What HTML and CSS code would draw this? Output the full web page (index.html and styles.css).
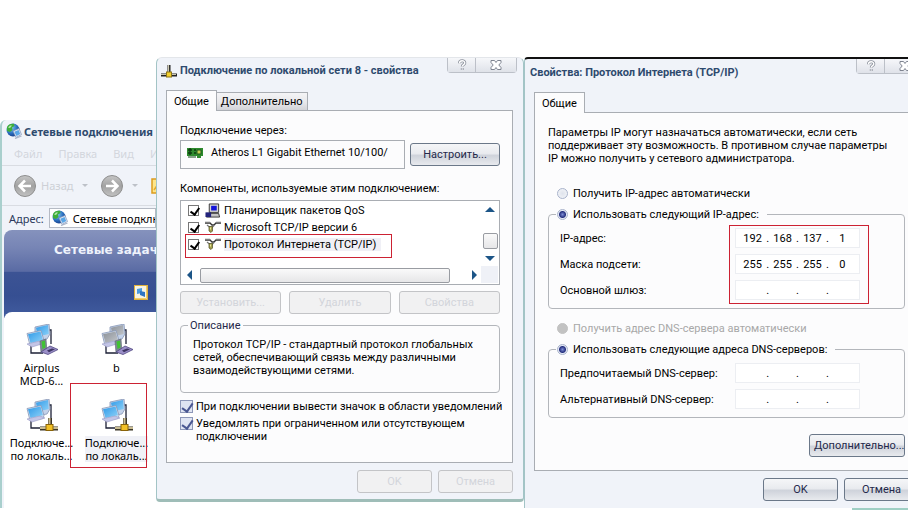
FILE: index.html
```html
<!DOCTYPE html>
<html lang="ru">
<head>
    <meta charset="UTF-8">
    <meta name="viewport" content="width=device-width, initial-scale=1.0">
    <title>Сетевые подключения</title>
    <link rel="stylesheet" href="styles.css">
</head>
<body>
    <!-- Shared icons -->
    <svg class="sprites" aria-hidden="true">
        <defs>
            <radialGradient id="globe-fill" cx="35%" cy="30%" r="75%">
                <stop offset="0" stop-color="#8fd0f5"/>
                <stop offset="0.6" stop-color="#2a6fc0"/>
                <stop offset="1" stop-color="#173c86"/>
            </radialGradient>
            <linearGradient id="screen-fill" x1="0" y1="0" x2="1" y2="1">
                <stop offset="0" stop-color="#2f9ae8"/>
                <stop offset="1" stop-color="#8fd2f8"/>
            </linearGradient>
            <linearGradient id="screen-off" x1="0" y1="0" x2="1" y2="1">
                <stop offset="0" stop-color="#8b9097"/>
                <stop offset="1" stop-color="#c3c7cc"/>
            </linearGradient>
            <linearGradient id="nav-fill" x1="0" y1="0" x2="0" y2="1">
                <stop offset="0" stop-color="#c6c6c6"/>
                <stop offset="0.5" stop-color="#a2a2a2"/>
                <stop offset="1" stop-color="#c2c2c2"/>
            </linearGradient>
        </defs>
        <symbol id="icon-globe" viewBox="0 0 16 16">
            <circle cx="7" cy="7" r="6.5" fill="url(#globe-fill)"/>
            <path d="M1 4C2 1.500 5 .3 8 .8L8.500 3 6 4.500 6.500 7 4 9 1 8z" fill="#3fae3a"/>
            <path d="M2 4.500l2-2 2 0-2 2.500z" fill="#b9e7b0"/>
            <path d="M7 8l6-2.500 2.500 6-5.500 3z" fill="#e3ecf8" stroke="#7f90b5" stroke-width=".7"/>
            <path d="M8.300 8.800L12.600 7 14.200 11l-3.700 1.900z" fill="#5aa6e6"/>
            <path d="M9 15.500l6.500-2.500" stroke="#aab5c9" stroke-width="1.300"/>
        </symbol>
        <symbol id="icon-pcs" viewBox="0 0 32 32">
            <path d="M18 6h7v14M5 21v8h12" fill="none" stroke="#1c2036" stroke-width="1.300"/>
            <path d="M9 3l14-3 1 10-3 5-12 2z" fill="#c3d2ea" stroke="#8796b5" stroke-width=".8"/>
            <path d="M10 3.700l12-2.700.8 9-3 .7-8 1.800z" fill="var(--screen)"/>
            <path d="M1 9.500l14-3 3 10-1 3-13 2z" fill="#d3dff0" stroke="#8796b5" stroke-width=".8"/>
            <path d="M2 10.300L14.500 7.600l2.500 8.700L4.500 19z" fill="var(--screen)"/>
            <path d="M1 20l13-3 5 2-13 4z" fill="#c3c5e6" stroke="#9a9cc8" stroke-width=".6"/>
        </symbol>
        <symbol id="icon-lan" viewBox="0 0 32 32">
            <use href="#icon-pcs"/>
            <path d="M24 19v8M14 29.500h18" stroke="#3a3526" stroke-width="4"/>
            <path d="M23.500 19v8M14 29h18" stroke="#c9bd93" stroke-width="2"/>
            <rect x="20" y="25.500" width="7" height="6" fill="#f2c025" stroke="#8a6408"/>
        </symbol>
        <symbol id="icon-modem" viewBox="0 0 32 32">
            <use href="#icon-pcs"/>
            <path d="M14 17l6-2 1 13-6 1z" fill="#7e8794" stroke="#5b6370" stroke-width=".6"/>
            <path d="M15.500 17.500l3.500-1 .5 7-3 1.500z" fill="#41c234"/>
            <path d="M15 28l9-6 8 3.500-10 5z" fill="#9b8fc8" stroke="#4f4680" stroke-width=".8"/>
            <path d="M21 26.500l5-2 3 .8-6 3z" fill="#3d3563"/>
        </symbol>
        <symbol id="icon-plug" viewBox="0 0 16 16">
            <path d="M8 2v8M0 12h16" stroke="#222" stroke-width="3"/>
            <path d="M7.500 2v8M0 11.500h15" stroke="#cbc7ae" stroke-width="1.200"/>
            <rect x="5.500" y="9" width="5" height="5" fill="#f3cf2c" stroke="#8c7417"/>
        </symbol>
        <symbol id="icon-protocol" viewBox="0 0 16 12">
            <path d="M0 1.500h5l2 2h2l2-2h5" fill="none" stroke="#333" stroke-width="1.300"/>
            <path d="M0 .4h5M11 .4h5" stroke="#b5b5b5" stroke-width=".8"/>
            <path d="M2 3.500l3 2.500M9 4L7 6" stroke="#777" stroke-width="1.200"/>
            <path d="M4 5h3.500v4.500L6 11 4 9.500z" fill="#a3a04e" stroke="#4c4b20" stroke-width=".7"/>
            <path d="M5 6h1v2H5z" fill="#eeeb9c"/>
        </symbol>
        <symbol id="icon-help" viewBox="0 0 12 12">
            <path d="M3.500 4.200C3.500 .9 8.800 .9 8.800 3.900 8.800 5.700 6.300 5.500 6.300 7.500M6.300 9.200v1.600" fill="none" stroke="#8b909b" stroke-width="3"/>
            <path d="M3.500 4.200C3.500 .9 8.800 .9 8.800 3.900 8.800 5.700 6.300 5.500 6.300 7.500M6.300 9.500v1" fill="none" stroke="#fff" stroke-width="1.400"/>
        </symbol>
        <symbol id="icon-close" viewBox="0 0 12 12">
            <path d="M1 1.500h3.500L6 3.500l1.500-2H11v2L8.800 6 11 8.500v2H7.500L6 8.500l-1.500 2H1v-2L3.200 6 1 3.500z" fill="#fff" stroke="#7f8490"/>
        </symbol>
    </svg>

    <div class="desktop">
        <section class="explorer">
            <header class="explorer-title">
                <svg class="icon-16"><use href="#icon-globe"/></svg>
                <h1>Сетевые подключения</h1>
            </header>
            <nav class="menu">
                <a href="#">Файл</a>
                <a href="#">Правка</a>
                <a href="#">Вид</a>
                <a href="#">Избранное</a>
            </nav>
            <div class="toolbar">
                <button class="nav-btn" aria-label="Назад" disabled>
                    <svg viewBox="0 0 22 22"><circle cx="11" cy="11" r="10.500" fill="url(#nav-fill)" stroke="#8e8e8e"/><path d="M17 11H6M11 5.500L5.500 11l5.500 5.500" fill="none" stroke="#fff" stroke-width="2.500"/></svg>
                </button>
                <span class="nav-label">Назад</span>
                <span class="drop"></span>
                <button class="nav-btn" aria-label="Вперед" disabled>
                    <svg viewBox="0 0 22 22"><circle cx="11" cy="11" r="10.500" fill="url(#nav-fill)" stroke="#8e8e8e"/><path d="M5 11h11M11 5.500l5.500 5.500-5.500 5.500" fill="none" stroke="#fff" stroke-width="2.500"/></svg>
                </button>
                <span class="drop"></span>
                <svg class="folder" viewBox="0 0 16 16"><path d="M1 1h6l1 2h8v12H1z" fill="#fde58a" stroke="#dc9c1e" stroke-width="1.500"/><path d="M3 12l4-6" stroke="#e7a92c" stroke-width="1.500"/></svg>
            </div>
            <div class="address">
                <span>Адрес:</span>
                <div class="address-box">
                    <svg class="icon-16"><use href="#icon-globe"/></svg>
                    <span>Сетевые подключения</span>
                </div>
            </div>
            <div class="tasks">
                <h2>Сетевые задачи</h2>
                <svg class="task-icon" viewBox="0 0 14 15"><rect x=".5" y=".5" width="13" height="14" fill="#f7f4e4" stroke="#e0b23d"/><path d="M12.500 1v12.500H1" fill="none" stroke="#f0cf6c"/><path d="M3 4l5-1v5l-5 1z" fill="#4a9be0"/><path d="M6 6l5 1v5l-5-2z" fill="#2f75c2"/></svg>
            </div>
            <div class="connections">
                <a href="#" class="connection">
                    <svg class="icon-32"><use href="#icon-modem"/></svg>
                    <span>Airplus<br>MCD-6...</span>
                </a>
                <a href="#" class="connection is-off">
                    <svg class="icon-32"><use href="#icon-modem"/></svg>
                    <span>b</span>
                </a>
                <a href="#" class="connection">
                    <svg class="icon-32"><use href="#icon-lan"/></svg>
                    <span>Подключе...<br>по локаль...</span>
                </a>
                <a href="#" class="connection is-selected">
                    <svg class="icon-32"><use href="#icon-lan"/></svg>
                    <span>Подключе...<br>по локаль...</span>
                    <i class="mark mark-connection"></i>
                </a>
            </div>
        </section>

        <section class="dialog dialog-lan">
            <header class="dialog-title">
                <svg class="icon-16"><use href="#icon-plug"/></svg>
                <h2>Подключение по локальной сети 8 - свойства</h2>
                <div class="window-btns">
                    <button aria-label="Справка"><svg><use href="#icon-help"/></svg></button>
                    <button aria-label="Закрыть"><svg><use href="#icon-close"/></svg></button>
                </div>
            </header>
            <div class="tabs">
                <button class="tab active">Общие</button>
                <button class="tab">Дополнительно</button>
            </div>
            <div class="panel">
                <div class="caption">Подключение через:</div>
                <div class="device-row">
                    <div class="device">
                        <svg viewBox="0 0 16 12"><path d="M0 1h16v8h-2v2h-4V9H0z" fill="#2d8a2d"/><path d="M1 3h4M1 6h4M7 3h2M7 6h2M3 1v7" stroke="#0c3d10" stroke-width="1.300"/><path d="M10 3h4v4h-4z" fill="#c3cf55" stroke="#1c5a1c"/><path d="M1 10h8" stroke="#114b15"/></svg>
                        <span>Atheros L1 Gigabit Ethernet 10/100/</span>
                    </div>
                    <button class="btn">Настроить...</button>
                </div>
                <div class="caption">Компоненты, используемые этим подключением:</div>
                <div class="list">
                    <div class="list-rows">
                        <label class="list-row">
                            <input type="checkbox" class="check-plain" checked>
                            <svg viewBox="0 0 16 16"><path d="M4 1h10v9H4z" fill="#d6d6d6" stroke="#333"/><path d="M6 3h6v5H6z" fill="#1414d8"/><path d="M1 11h13l1 4H1z" fill="#c4c4c4" stroke="#333"/><path d="M0 10h6v5H0z" fill="#23237c"/></svg>
                            <span>Планировщик пакетов QoS</span>
                        </label>
                        <label class="list-row">
                            <input type="checkbox" class="check-plain" checked>
                            <svg><use href="#icon-protocol"/></svg>
                            <span>Microsoft TCP/IP версии 6</span>
                        </label>
                        <label class="list-row">
                            <input type="checkbox" class="check-plain" checked>
                            <svg><use href="#icon-protocol"/></svg>
                            <span class="selected">Протокол Интернета (TCP/IP)</span>
                            <i class="mark mark-row"></i>
                        </label>
                    </div>
                    <div class="scroll-y">
                        <span class="arrow up"></span>
                        <span class="thumb"></span>
                        <span class="arrow down"></span>
                    </div>
                    <div class="scroll-x">
                        <span class="arrow left"></span>
                        <span class="thumb"></span>
                        <span class="arrow right"></span>
                    </div>
                    <div class="scroll-corner"></div>
                </div>
                <div class="btn-row">
                    <button class="btn" disabled>Установить...</button>
                    <button class="btn" disabled>Удалить</button>
                    <button class="btn" disabled>Свойства</button>
                </div>
                <fieldset class="description">
                    <legend>Описание</legend>
                    <p>Протокол TCP/IP - стандартный протокол глобальных сетей, обеспечивающий связь между различными взаимодействующими сетями.</p>
                </fieldset>
                <label class="option">
                    <input type="checkbox" class="check" checked>
                    <span>При подключении вывести значок в области уведомлений</span>
                </label>
                <label class="option">
                    <input type="checkbox" class="check" checked>
                    <span>Уведомлять при ограниченном или отсутствующем<br>подключении</span>
                </label>
            </div>
            <footer class="dialog-btns">
                <button class="btn" disabled>OK</button>
                <button class="btn" disabled>Отмена</button>
            </footer>
        </section>

        <section class="dialog dialog-tcp">
            <header class="dialog-title">
                <h2>Свойства: Протокол Интернета (TCP/IP)</h2>
                <div class="window-btns">
                    <button aria-label="Справка"><svg><use href="#icon-help"/></svg></button>
                    <button aria-label="Закрыть"><svg><use href="#icon-close"/></svg></button>
                </div>
            </header>
            <div class="tabs">
                <button class="tab active">Общие</button>
            </div>
            <div class="panel">
                <p class="intro">Параметры IP могут назначаться автоматически, если сеть поддерживает эту возможность. В противном случае параметры IP можно получить у сетевого администратора.</p>
                <label class="radio">
                    <input type="radio" name="ip">
                    <span>Получить IP-адрес автоматически</span>
                </label>
                <fieldset class="group">
                    <legend>
                        <label class="radio">
                            <input type="radio" name="ip" checked>
                            <span>Использовать следующий IP-адрес:</span>
                        </label>
                    </legend>
                    <div class="field">
                        <label for="ip-1">IP-адрес:</label>
                        <div class="octets">
                            <input id="ip-1" value="192">.<input aria-label="IP-адрес 2" value="168">.<input aria-label="IP-адрес 3" value="137">.<input aria-label="IP-адрес 4" value="1">
                        </div>
                    </div>
                    <div class="field">
                        <label for="mask-1">Маска подсети:</label>
                        <div class="octets">
                            <input id="mask-1" value="255">.<input aria-label="Маска 2" value="255">.<input aria-label="Маска 3" value="255">.<input aria-label="Маска 4" value="0">
                        </div>
                    </div>
                    <div class="field">
                        <label for="gate-1">Основной шлюз:</label>
                        <div class="octets">
                            <input id="gate-1">.<input aria-label="Шлюз 2">.<input aria-label="Шлюз 3">.<input aria-label="Шлюз 4">
                        </div>
                    </div>
                    <i class="mark mark-ip"></i>
                </fieldset>
                <label class="radio">
                    <input type="radio" name="dns" disabled>
                    <span>Получить адрес DNS-сервера автоматически</span>
                </label>
                <fieldset class="group">
                    <legend>
                        <label class="radio">
                            <input type="radio" name="dns" checked>
                            <span>Использовать следующие адреса DNS-серверов:</span>
                        </label>
                    </legend>
                    <div class="field">
                        <label for="dns-1">Предпочитаемый DNS-сервер:</label>
                        <div class="octets">
                            <input id="dns-1">.<input aria-label="DNS 2">.<input aria-label="DNS 3">.<input aria-label="DNS 4">
                        </div>
                    </div>
                    <div class="field">
                        <label for="alt-1">Альтернативный DNS-сервер:</label>
                        <div class="octets">
                            <input id="alt-1">.<input aria-label="Альтернативный DNS 2">.<input aria-label="Альтернативный DNS 3">.<input aria-label="Альтернативный DNS 4">
                        </div>
                    </div>
                </fieldset>
                <button class="btn more">Дополнительно...</button>
            </div>
            <footer class="dialog-btns">
                <button class="btn">OK</button>
                <button class="btn">Отмена</button>
            </footer>
        </section>
    </div>
</body>
</html>
```
FILE: styles.css
```css
:root {
    --window: #f0f3f9;
    --panel: #fcfcfd;
    --line: #a9adb3;
    --title: #2e4a6e;
    --mark: #cc2233;
    --ui: Roboto, "Liberation Sans", sans-serif;
    --system: "Noto Sans", "Open Sans", sans-serif;
}

* {
    box-sizing: border-box;
}

body {
    margin: 0;
    background: #fff;
    color: #000;
    font: 11px/13px var(--ui);
    overflow: hidden;
}

h1, h2, p {
    margin: 0;
}

a {
    color: inherit;
    text-decoration: none;
}

button, input {
    font: inherit;
    color: inherit;
}

.sprites {
    position: absolute;
    width: 0;
    height: 0;
}

.icon-16 {
    width: 16px;
    height: 16px;
    flex: none;
}

.icon-32 {
    width: 32px;
    height: 32px;
}

.desktop {
    display: grid;
    grid-template-columns: 156fr 368fr 384fr;
    align-items: start;
    padding-top: 57px;
    min-height: 100vh;
    overflow: hidden;
}

/* red annotation frames */
.mark {
    position: absolute;
    border: 1px solid var(--mark);
    pointer-events: none;
}

/* Explorer window */
.explorer {
    margin-top: 63px;
    min-width: 0;
    height: 388px;
    overflow: hidden;
    background: var(--window);
    border-left: 2px solid #a9cfcd;
    border-top-left-radius: 6px;
    font: 11px/13px var(--system);
    white-space: nowrap;
}

.explorer-title {
    display: flex;
    align-items: center;
    gap: 2px;
    height: 22px;
    padding-left: 4px;
}

.explorer-title h1 {
    font-size: 11px;
    color: var(--title);
}

.menu {
    display: flex;
    align-items: center;
    gap: 16px;
    height: 24px;
    padding-left: 12px;
    border-bottom: 1px solid #d9dce2;
    color: #d3d6dd;
}

.toolbar {
    display: flex;
    align-items: center;
    height: 40px;
    padding-left: 12px;
    border-bottom: 1px solid #d9dce2;
}

.nav-btn {
    width: 22px;
    height: 22px;
    padding: 0;
    border: none;
    background: none;
    flex: none;
}

.nav-btn svg {
    display: block;
    width: 22px;
    height: 22px;
}

.nav-label {
    padding: 0 9px 0 5px;
    color: #cdd0d6;
}

.drop {
    flex: none;
    margin: 0 13px 0 0;
    border: 3px solid transparent;
    border-top-color: #bdc1c8;
    border-bottom: none;
}

.nav-btn + .drop {
    margin-left: 9px;
}

.folder {
    width: 16px;
    height: 16px;
    flex: none;
}

.address {
    display: flex;
    align-items: center;
    gap: 5px;
    height: 24px;
    padding-left: 7px;
    color: #2c3a5c;
}

.address-box {
    display: flex;
    align-items: center;
    gap: 5px;
    flex: 1;
    height: 20px;
    padding-left: 2px;
    overflow: hidden;
    border: 1px solid #b5bac4;
    background: #fff;
    color: #000;
}

.tasks {
    display: flex;
    flex-direction: column;
    justify-content: space-between;
    height: 88px;
    margin-left: 2px;
    padding: 13px 8px 18px 50px;
    border-top-left-radius: 8px;
    background: linear-gradient(#8592bd, #7785b5 20%, #5a6ba4 47%, #3c5394 48%, #364f92 75%, #415c9f);
}

.tasks h2 {
    font: bold 12px/14px "DejaVu Sans", sans-serif;
    color: #eef2fb;
}

.task-icon {
    align-self: flex-end;
    width: 14px;
    height: 15px;
}

.connections {
    display: grid;
    grid-template-columns: 75px 75px;
    align-content: start;
    row-gap: 12px;
    height: 200px;
    margin: -6px 0 0 2px;
    padding-top: 12px;
    border-top-left-radius: 8px;
    background: #fff;
}

.connection {
    --screen: url(#screen-fill);
    position: relative;
    display: flex;
    flex-direction: column;
    align-items: center;
    gap: 5px;
    text-align: center;
}

.connection.is-off {
    --screen: url(#screen-off);
}

.connection.is-selected span {
    background: #f0f1f7;
}

.mark-connection {
    inset: -16px 7px -6px -9px;
}

/* Dialog windows */
.dialog {
    position: relative;
    min-width: 0;
    padding: 0 10px 0 9px;
    background: var(--window);
    border: 1px solid #a3c4c6;
    border-top-color: #e3e6ea;
}

.dialog-lan {
    border-bottom: 3px solid #9fbdb8;
    border-radius: 6px 6px 4px 4px;
}

/* runs past the right edge of the screen */
.dialog-tcp {
    margin-right: -22px;
    border-top: 2px solid #111;
    border-bottom: none;
    border-top-left-radius: 4px;
}

.dialog-tcp::after {
    content: "";
    position: absolute;
    left: 327px;
    right: 0;
    bottom: -2px;
    height: 2px;
    background: #9fcfc4;
}

.dialog-title {
    display: flex;
    align-items: center;
    gap: 3px;
    height: 25px;
    margin: 0 -4px 0 -5px;
}

.dialog-tcp .dialog-title {
    height: 26px;
    margin: 0 -7px 0 -4px;
}

.dialog-title h2 {
    flex: 1;
    font: bold 11px/15px var(--ui);
    white-space: nowrap;
    color: var(--title);
}

.window-btns {
    display: flex;
    align-self: flex-start;
    border: 1px solid #bcc0c8;
    border-top: none;
    border-radius: 0 0 4px 4px;
}

.window-btns button {
    display: flex;
    align-items: center;
    justify-content: center;
    width: 27px;
    height: 14px;
    padding: 0;
    border: none;
    background: linear-gradient(#f6f7fa, #dfe2e9);
}

.window-btns button + button {
    width: 41px;
    border-left: 1px solid #bcc0c8;
}

.window-btns svg {
    width: 12px;
    height: 12px;
}

.tabs {
    display: flex;
    align-items: flex-end;
    height: 27px;
}

.tab {
    height: 18px;
    padding: 0 4px;
    border: 1px solid var(--line);
    border-bottom: none;
    border-left: none;
    background: linear-gradient(#f4f4f6, #e8e8eb 55%, #d2d3d8);
}

.tab.active {
    position: relative;
    z-index: 1;
    height: 21px;
    margin-bottom: -1px;
    padding: 0 7px;
    border-left: 1px solid var(--line);
    background: var(--panel);
}

.panel {
    border: 1px solid var(--line);
    background: var(--panel);
}

.dialog-lan .panel {
    height: 353px;
    padding: 13px 12px 0 13px;
}

.dialog-tcp .panel {
    height: 359px;
    padding: 13px 13px 0;
}

.btn {
    height: 23px;
    min-width: 75px;
    padding: 0 4px;
    border: 1px solid #6b7889;
    border-radius: 3px;
    background: linear-gradient(#f5f6f8, #e9ebef 45%, #cfd3db 55%, #e8eaee);
    color: #24284a;
}

.btn:disabled {
    border-color: #c3c4c7;
    background: #f1f1f2;
    color: #d3d5db;
}

.caption {
    line-height: 13px;
}

.device-row {
    display: flex;
    align-items: center;
    gap: 5px;
    margin: 3px 0 13px;
}

.device {
    display: flex;
    align-items: center;
    gap: 8px;
    flex: 1;
    height: 29px;
    padding: 0 6px 4px;
    border: 1px solid var(--line);
    white-space: nowrap;
}

.device svg {
    width: 16px;
    height: 12px;
}

.device-row .btn {
    width: 90px;
}

.list {
    display: grid;
    grid-template-columns: 1fr 18px;
    grid-template-rows: 1fr 18px;
    height: 85px;
    margin-top: 5px;
    border: 1px solid var(--line);
    background: #fff;
}

.list-rows {
    padding-top: 1px;
}

.list-row {
    position: relative;
    display: flex;
    align-items: center;
    gap: 3px;
    height: 17px;
    padding-left: 7px;
}

.list-row svg {
    width: 16px;
    height: 15px;
    margin-left: 3px;
}

.list-row .selected {
    padding-right: 5px;
    background: #f0f0f6;
}

.mark-row {
    inset: -2px 89px -5px 4px;
}

.scroll-y, .scroll-x {
    display: flex;
    align-items: center;
    justify-content: space-between;
}

.scroll-y {
    flex-direction: column;
    padding: 6px 0 5px;
}

.scroll-x {
    padding: 0 4px 0 6px;
}

.thumb {
    border: 1px solid #999ca2;
    border-radius: 2px;
    background: linear-gradient(#fafafa, #e6e6e8);
}

.scroll-y .thumb {
    width: 15px;
    height: 16px;
    margin-top: 13px;
}

.scroll-x .thumb {
    flex: 1;
    height: 15px;
    margin: 0 22px 0 8px;
}

.scroll-corner {
    margin: 0 1px 1px 0;
    background: #eff1f7;
}

.arrow {
    border: 5px solid transparent;
}

.arrow.up {
    border-top: none;
    border-bottom-color: #1c5587;
}

.arrow.down {
    border-bottom: none;
    border-top-color: #1c5587;
}

.arrow.left {
    border-left: none;
    border-right-color: #1c5587;
}

.arrow.right {
    border-right: none;
    border-left-color: #1c5587;
}

.btn-row {
    display: grid;
    grid-template-columns: repeat(3, 1fr);
    gap: 8px;
    margin: 6px 0 5px;
}

fieldset {
    position: relative;
    min-width: 0;
    margin: 0;
    border: 1px solid #b3b6bb;
    border-radius: 4px;
}

.description {
    height: 74px;
    margin-bottom: 7px;
    padding: 6px 12px;
}

.description legend {
    margin-left: -5px;
    padding: 0 2px;
    color: #24284a;
}

.option {
    display: flex;
    align-items: flex-start;
    gap: 3px;
    margin-bottom: 4px;
    white-space: nowrap;
}

input[type="checkbox"], input[type="radio"] {
    appearance: none;
    flex: none;
    margin: 0;
}

.check {
    width: 13px;
    height: 13px;
    border: 1px solid #8d97b8;
    background: #dfe4f2;
}

.check-plain {
    width: 11px;
    height: 11px;
    border: 1px solid #777;
    background: #fff;
}

.check:checked::before, .check-plain:checked::before {
    content: "";
    display: block;
    width: 5px;
    height: 9px;
    margin: 0 0 0 3px;
    border: solid #4a5792;
    border-width: 0 2px 2px 0;
    transform: rotate(35deg);
}

.check-plain:checked::before {
    width: 4px;
    height: 7px;
    border-color: #000;
}

.dialog-btns {
    display: flex;
    justify-content: flex-end;
    gap: 6px;
    padding: 7px 0 6px;
}

.dialog-tcp .dialog-btns {
    padding-bottom: 7px;
}

.intro {
    margin: 0 14px 22px 0;
}

.radio {
    display: flex;
    align-items: center;
    gap: 5px;
    height: 13px;
    padding-left: 9px;
}

input[type="radio"] {
    width: 11px;
    height: 11px;
    border: 1px solid #a9b3cb;
    border-radius: 50%;
    background: radial-gradient(#dfe3ec, #f5f7fa);
}

input[type="radio"]:checked {
    background: radial-gradient(#7f8ed6 0, #25307f 3px, #e6eaf6 4px);
}

input[type="radio"]:disabled {
    border-color: #c2c2c2;
    background: #c2c2c2;
}

input[type="radio"]:disabled + span {
    color: #a8a8a8;
}

.group {
    margin: 8px 0 13px;
    padding: 7px 11px 8px;
}

.group legend {
    margin-left: -4px;
    padding: 0 8px 0 0;
}

.group legend .radio {
    padding-left: 1px;
}

.field {
    display: flex;
    align-items: center;
    justify-content: space-between;
    height: 20px;
    margin: 0 33px 6px 0;
    white-space: nowrap;
}

.field:last-of-type {
    margin-bottom: 0;
}

.octets {
    display: flex;
    flex: none;
    align-items: center;
    justify-content: center;
    width: 125px;
    height: 20px;
    border: 1px solid #eceef2;
    background: #fff;
}

.octets input {
    width: 27px;
    height: 18px;
    padding: 0;
    border: none;
    background: none;
    text-align: center;
}

.mark-ip {
    inset: 4px 35px 4px auto;
    width: 140px;
}

.more {
    display: block;
    width: 96px;
    margin: 16px 0 0 auto;
}
```
